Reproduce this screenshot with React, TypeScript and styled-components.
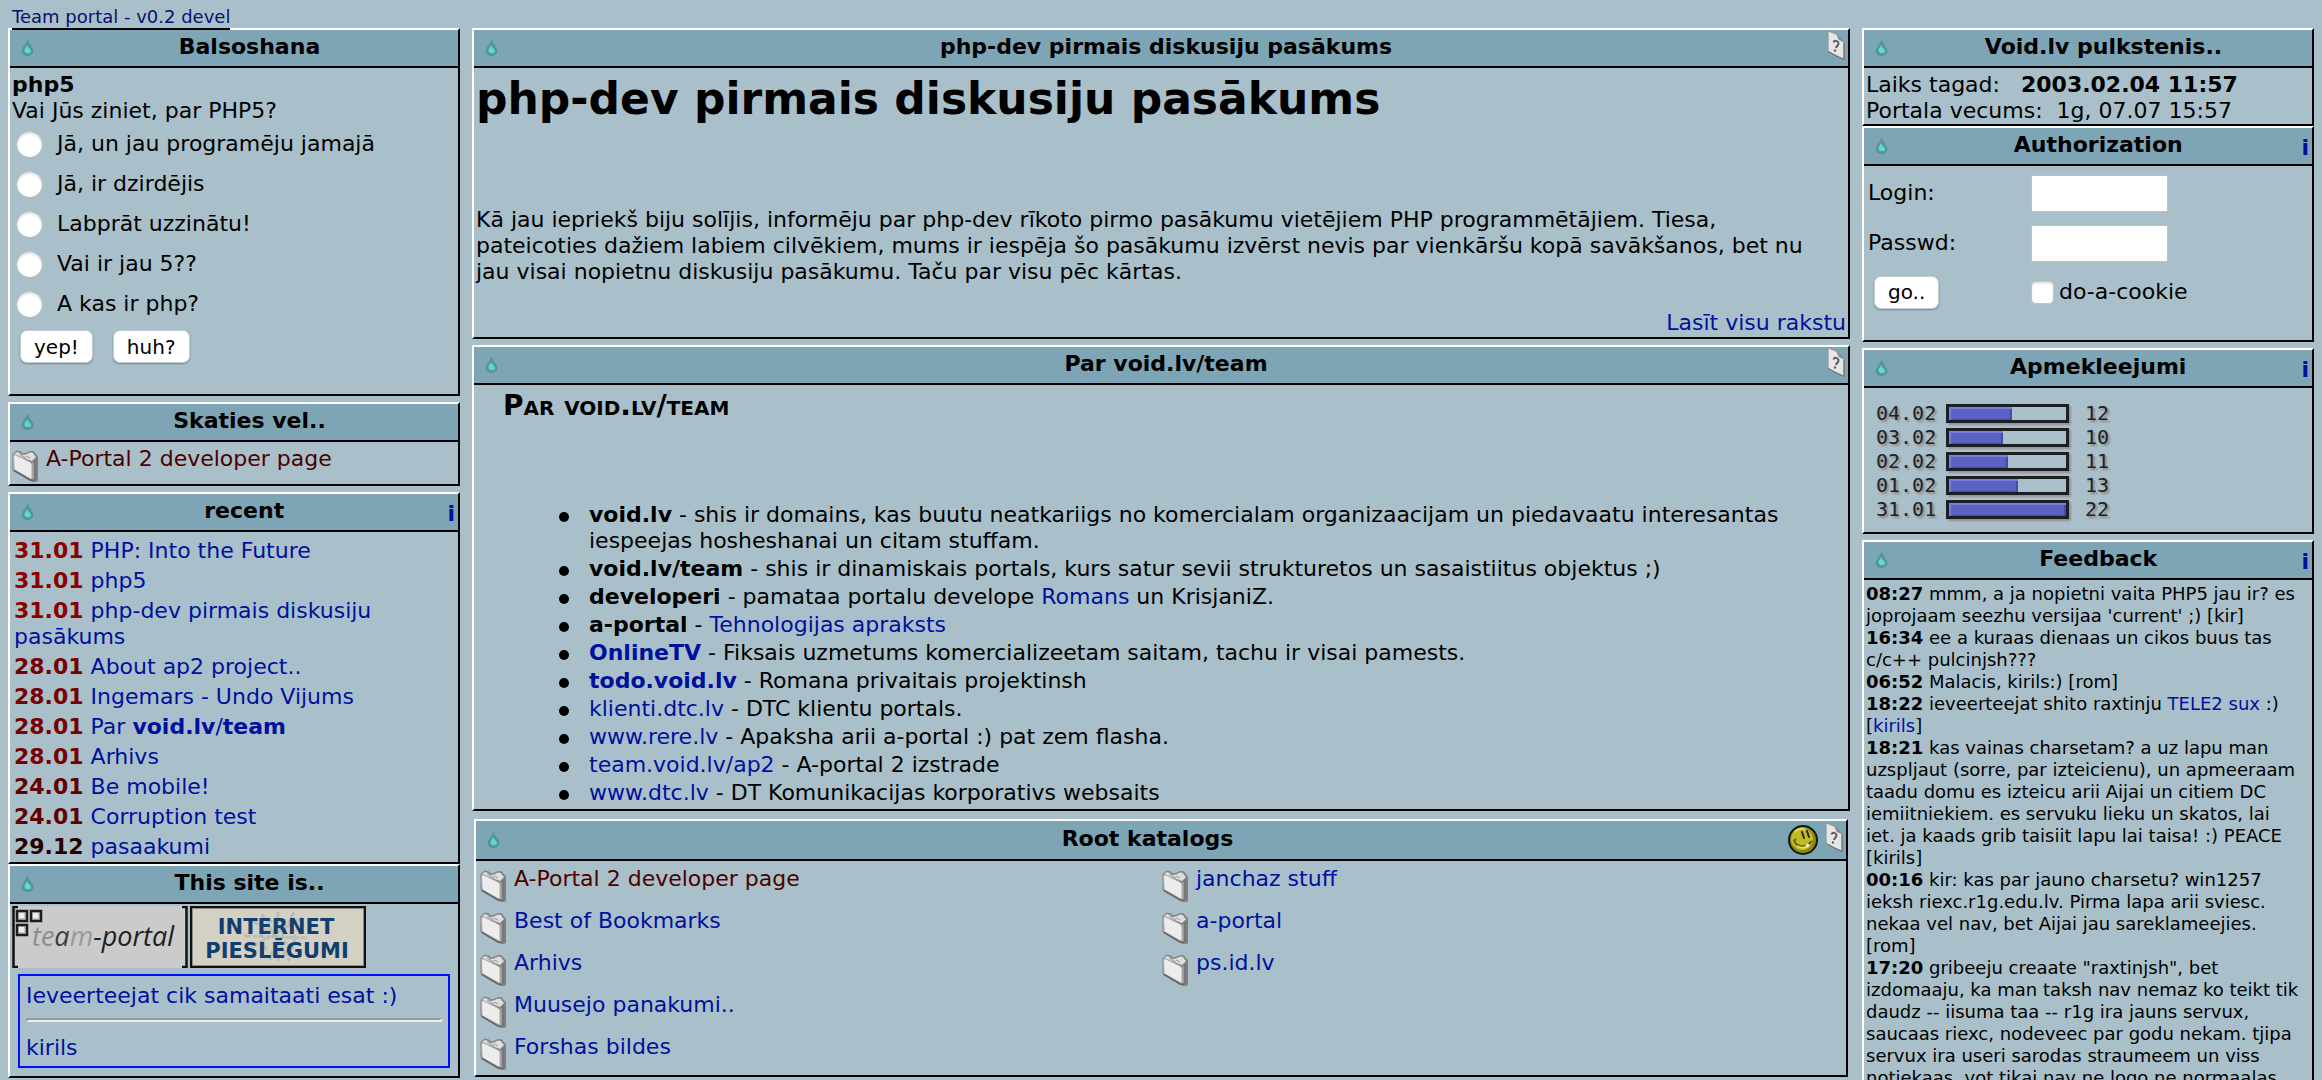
import React from "react";
import styled, { createGlobalStyle } from "styled-components";

const colors = {
  page: "#a9c0ca",
  header: "#7da5b6",
  link: "#00109c",
  visited: "#4b0000",
};

const GlobalStyle = createGlobalStyle`
  * { box-sizing: border-box; }
  html { scrollbar-width: none; }
  body {
    margin: 0;
    background: ${colors.page};
    color: #000;
    font-family: Verdana, "DejaVu Sans", sans-serif;
    font-size: 22px;
    line-height: 26px;
  }
  h1, h2, h3, p, ul { margin: 0; padding: 0; }
  ul { list-style: none; }
`;

const Page = styled.div`
  padding: 6px 8px 0;
`;

const TopBar = styled.header`
  display: flex;
  height: 22px;
  padding-left: 4px;
`;

const VersionLink = styled.a`
  position: relative;
  z-index: 1;
  height: 24px;
  border-bottom: 2px solid #000;
  color: #0a1070;
  font-size: 18px;
  line-height: 22px;
  text-decoration: none;
`;

const Columns = styled.main`
  display: grid;
  grid-template-columns: 452px minmax(0, 1fr) 452px;
  gap: 12px;
  align-items: start;
`;

const Column = styled.div`
  display: flex;
  flex-direction: column;
`;

const PanelBox = styled.section<{ $gap: number; $inset: number }>`
  margin: ${(p) => p.$gap}px ${(p) => p.$inset}px 0;
  border: 2px solid;
  border-color: #fff #000 #000 #fff;
`;

const PanelHeader = styled.header<{ $tall: boolean }>`
  display: flex;
  align-items: center;
  height: ${(p) => (p.$tall ? 40 : 38)}px;
  border-bottom: 2px solid #000;
  background: ${colors.header};
`;

const DropCell = styled.span`
  display: flex;
  width: 31px;
  padding-left: 11px;
`;

const PanelTitle = styled.h2`
  flex: 1;
  padding-bottom: 2px;
  font-size: 22px;
  line-height: 26px;
  text-align: center;
`;

const Tools = styled.span`
  display: flex;
  align-items: center;
  gap: 7px;
  padding-right: 3px;
`;

const InfoLink = styled.a`
  padding-top: 4px;
  color: ${colors.link};
  font-weight: bold;
  text-decoration: none;
`;

const Body = styled.div<{ $pad: string }>`
  padding: ${(p) => p.$pad};
`;

const Link = styled.a<{ $visited?: boolean }>`
  color: ${(p) => (p.$visited ? colors.visited : colors.link)};
  text-decoration: none;
`;

const Option = styled.label`
  display: flex;
  align-items: center;
  gap: 14px;
  height: 40px;
  padding-left: 4px;
`;

const Radio = styled.input`
  appearance: none;
  width: 27px;
  height: 27px;
  margin: 0;
  border: 1px solid #b4b8ba;
  border-radius: 50%;
  background: #fff;
  box-shadow: inset 0 2px 2px #e2e2e2;
  &:checked { background: radial-gradient(#333 30%, #fff 34%); }
`;

const ButtonRow = styled.div`
  display: flex;
  gap: 20px;
  padding: 6px 8px;
`;

const Button = styled.button`
  justify-self: start;
  height: 33px;
  padding: 0 13px;
  border: 1px solid #c3ccd1;
  border-radius: 7px;
  background: #fff;
  box-shadow: 0 1px 2px #6f8590;
  color: #000;
  font-family: inherit;
  font-size: 20px;
  line-height: 30px;
`;

const FolderRow = styled.div`
  display: flex;
  gap: 8px;
  height: 36px;
  svg { margin-top: 4px; }
`;

const RecentList = styled.ul`
  display: flex;
  flex-direction: column;
  gap: 4px;
`;

const DateMark = styled.b<{ $color: string }>`
  color: ${(p) => p.$color};
`;

const Badges = styled.div`
  display: flex;
  gap: 2px;
  a { display: flex; }
`;

const Quote = styled.div`
  margin: 6px;
  padding: 7px 6px 5px;
  border: 2px solid #0010ff;
`;

const Rule = styled.hr`
  height: 4px;
  margin: 9px 0 13px;
  border: 2px solid;
  border-color: #999a9c #eee #eee #999a9c;
`;

const Headline = styled.h1`
  margin-bottom: 81px;
  font-size: 44px;
  line-height: 54px;
`;

const Lead = styled.p`
  padding-right: 24px;
`;

const ReadMore = styled.div`
  margin-top: 25px;
  text-align: right;
`;

const SmallCaps = styled.h3`
  margin: 0 0 80px 27px;
  font-size: 28px;
  line-height: 32px;
  font-variant: small-caps;
`;

const Bullets = styled.ul`
  display: flex;
  flex-direction: column;
  gap: 2px;
  padding: 0 32px 0 83px;
`;

const Bullet = styled.li`
  display: grid;
  grid-template-columns: 30px 1fr;
  &::before {
    content: "";
    width: 10px;
    height: 10px;
    margin-top: 10px;
    border-radius: 50%;
    background: #000;
  }
`;

const Catalog = styled.div`
  display: grid;
  grid-template-columns: 1fr 1fr;
  grid-template-rows: repeat(5, 36px);
  grid-auto-flow: column;
  row-gap: 6px;
`;

const LoginForm = styled.form`
  display: grid;
  grid-template-columns: 163px 1fr;
  grid-auto-rows: 50px;
  align-items: center;
`;

const TextField = styled.input`
  width: 137px;
  height: 37px;
  padding: 4px;
  border: 1px solid #bfc0c0;
  background: #fff;
  font: inherit;
`;

const GoCell = styled.div`
  display: flex;
  padding: 0 0 2px 6px;
`;

const CookieLabel = styled.label`
  display: flex;
  align-items: center;
  gap: 5px;
  padding-bottom: 2px;
`;

const Checkbox = styled.input`
  appearance: none;
  width: 23px;
  height: 23px;
  margin: 0;
  border: 1px solid #c2c4c5;
  border-radius: 5px;
  background: #fff;
  box-shadow: inset 0 2px 2px #e6e6e6;
  &:checked { background: #445; }
`;

const VisitRow = styled.div`
  display: grid;
  grid-template-columns: 70px 123px 1fr;
  align-items: center;
  height: 24px;
  font-family: "DejaVu Sans Mono", monospace;
  font-size: 20px;
  line-height: 24px;
  color: #222;
  text-shadow: 2px 2px 2px #8f8583;
`;

const Bar = styled.div`
  height: 19px;
  border: 3px solid #1c1f24;
  box-shadow: 2px 2px 2px #988f8e;
`;

const BarFill = styled.div`
  height: 100%;
  background: #5c61c6;
  box-shadow: inset 2px 2px 1px #7b80dc, inset -2px -1px 1px #444aa6;
`;

const VisitCount = styled.span`
  padding-left: 16px;
`;

const Feed = styled.div`
  font-size: 18px;
  line-height: 22px;
`;

const DropIcon = () => (
  <svg width="13" height="16" viewBox="0 0 13 16" aria-hidden="true">
    <path d="M6.5 0.5 C7 4 12 7.500 12 11 C12 14 9.500 15.500 6.500 15.500 C3.500 15.500 1 14 1 11 C1 7.500 6 4 6.500 0.500Z" fill="#4d9c9f" stroke="#5b8d99" strokeWidth="1" />
    <path d="M6 5 C7 8 10 9 10 11.500 C10 13.500 3.500 14 3.500 10.500 C3.500 8.500 5.500 7.500 6 5Z" fill="#62d8cf" />
  </svg>
);

const FolderIcon = () => (
  <svg width="26" height="32" viewBox="0 0 26 32" aria-hidden="true">
    <path d="M1 4 L5 1 L9 2 L11 4 L15 3 L18 1.500 L22 2 L23 4 L25.500 6 V31 L23 31.500 L18 30 L1 20Z" fill="#858585" stroke="#808080" strokeWidth="1" />
    <path d="M2 4 L5 2 L8 3 L10 5 L14 4.500 L18 2.500 L21 3 L22 5 L24 7 L20 11 L3 4.500Z" fill="#dedede" />
    <path d="M7 4 L14 8 M14 6 L18 8" stroke="#999" fill="none" />
    <path d="M1.500 5 L4 5 L18 12 L20 14 V29 L18 28.500 L2 19.500Z" fill="#ececec" stroke="#aaa" strokeWidth="1" />
    <path d="M20.500 12 L24.500 8.500 V30 L21.500 30.500 Z" fill="#777" />
    <path d="M21 12 V29" stroke="#bbb" />
    <path d="M2 20.500 L18 30 L22 31" stroke="#666" fill="none" strokeWidth="1.500" />
  </svg>
);

const PageIcon = () => (
  <svg width="18" height="30" viewBox="0 0 18 30" aria-hidden="true">
    <path d="M1 0.800 L10 4.500 L12 9 L17 12 V29.200 L9 25.500 L1 21.500Z" fill="#e6e6e6" stroke="#959595" strokeWidth="1.200" />
    <path d="M10 4.500 L17 11.500 L12 10Z" fill="#888" />
    <path d="M6.500 12.500 C7.500 9.500 11 11 11.500 13 C12 15 9.500 15.500 9 18" fill="none" stroke="#5c5c5c" strokeWidth="2" />
    <path d="M8.500 19.500 L7.500 21.500" stroke="#5c5c5c" strokeWidth="2" />
    <path d="M1.500 21.500 L9 26 L17 29.500 V13" stroke="#6c6c6c" fill="none" />
  </svg>
);

const SmileyIcon = () => (
  <svg width="30" height="30" viewBox="0 0 30 30" aria-hidden="true">
    <circle cx="15" cy="15" r="14" fill="#8c8718" stroke="#16180c" strokeWidth="2" />
    <circle cx="14" cy="14" r="11" fill="#c1bb25" />
    <path d="M7 7 C9 4 14 3 17 4" stroke="#dcd85c" strokeWidth="2" fill="none" />
    <path d="M14 7 L16 13 M19 6 L21 12" stroke="#29280a" strokeWidth="2" strokeLinecap="round" />
    <path d="M6 15 C8 22 17 24 24 16 M5.500 16 L8 14" stroke="#6a6412" strokeWidth="2" fill="none" />
    <path d="M9 21 C13 24 18 23 21 20" stroke="#e4df4c" strokeWidth="2" fill="none" />
    <circle cx="19.500" cy="20.500" r="1.800" fill="#fbf9b8" />
  </svg>
);

const squares = [[4, 4], [18, 4], [4, 18]];

const TeamBadge = () => (
  <svg width="176" height="62" viewBox="0 0 176 62" role="img" aria-label="team-portal">
    <rect width="176" height="62" fill="#cbcbcb" />
    <path d="M6 1 H1.500 V61 H6 M170 1 H174.500 V61 H170" fill="none" stroke="#111" strokeWidth="2.500" />
    {squares.map(([x, y]) => (
      <g key={`${x}-${y}`}>
        <rect x={x + 1} y={y + 1} width="10" height="10" fill="#c4c4bd" stroke="#1d1d1d" strokeWidth="2.500" />
        <rect x={x + 3} y={y + 3} width="5" height="5" fill="#eeeeea" />
      </g>
    ))}
    <text x="20" y="40" fontFamily="'Open Sans', 'Noto Sans', sans-serif" fontSize="27" fontStyle="italic" fill="#202020">
      <tspan fill="#8d8d8d">te</tspan><tspan fill="#3c3c3c">a</tspan><tspan fill="#999">m</tspan>-portal
    </text>
  </svg>
);

const InternetBadge = () => (
  <svg width="176" height="62" viewBox="0 0 176 62" role="img" aria-label="Internet pieslēgumi">
    <rect x="1" y="1" width="174" height="60" fill="#d5d0c4" stroke="#111" strokeWidth="2" />
    <rect x="2.500" y="2.500" width="171" height="57" fill="none" stroke="#8d8a82" />
    <g fill="none" stroke="#bbbcb5" strokeWidth="3">
      <path d="M88 6 V55 M63 15 L112 48 M112 12 L60 42 M72 8 L100 56 M104 6 L80 54 M54 30 L118 32" strokeDasharray="7 2 4 1" />
      <circle cx="88" cy="31" r="17" strokeDasharray="9 4" />
    </g>
    <g fontFamily="'DejaVu Sans', sans-serif" fontSize="21" fontWeight="bold" fill="#103e6e" textAnchor="middle">
      <text x="86" y="28">INTERNET</text>
      <text x="87" y="52">PIESLĒGUMI</text>
    </g>
  </svg>
);

type PanelProps = {
  title: string;
  tools?: React.ReactNode;
  gap?: number;
  inset?: number;
  tall?: boolean;
  pad: string;
  children: React.ReactNode;
};

const Panel = ({ title, tools, gap = 0, inset = 0, tall = false, pad, children }: PanelProps) => (
  <PanelBox $gap={gap} $inset={inset}>
    <PanelHeader $tall={tall}>
      <DropCell><DropIcon /></DropCell>
      <PanelTitle>{title}</PanelTitle>
      {tools && <Tools>{tools}</Tools>}
    </PanelHeader>
    <Body $pad={pad}>{children}</Body>
  </PanelBox>
);

const Info = () => <InfoLink href="#info">i</InfoLink>;

const Folder = ({ name, visited }: { name: string; visited?: boolean }) => (
  <FolderRow>
    <FolderIcon />
    <Link href="#folder" $visited={visited}>{name}</Link>
  </FolderRow>
);

const answers = [
  "Jā, un jau programēju jamajā",
  "Jā, ir dzirdējis",
  "Labprāt uzzinātu!",
  "Vai ir jau 5??",
  "A kas ir php?",
];

const recent: [string, string, React.ReactNode][] = [
  ["31.01", "#8b0000", "PHP: Into the Future"],
  ["31.01", "#8b0000", "php5"],
  ["31.01", "#8b0000", "php-dev pirmais diskusiju pasākums"],
  ["28.01", "#780000", "About ap2 project.."],
  ["28.01", "#780000", "Ingemars - Undo Vijums"],
  ["28.01", "#780000", <>Par <b>void.lv</b>/<b>team</b></>],
  ["28.01", "#780000", "Arhivs"],
  ["24.01", "#640000", "Be mobile!"],
  ["24.01", "#640000", "Corruption test"],
  ["29.12", "#260000", "pasaakumi"],
];

const visits: [string, number, number][] = [
  ["04.02", 12, 54],
  ["03.02", 10, 46],
  ["02.02", 11, 50],
  ["01.02", 13, 59],
  ["31.01", 22, 100],
];

const feedback: [string, React.ReactNode][] = [
  ["08:27", "mmm, a ja nopietni vaita PHP5 jau ir? es joprojaam seezhu versijaa 'current' ;) [kir]"],
  ["16:34", "ee a kuraas dienaas un cikos buus tas c/c++ pulcinjsh???"],
  ["06:52", "Malacis, kirils:) [rom]"],
  ["18:22", <>ieveerteejat shito raxtinju <Link href="#tele2">TELE2 sux</Link> :) [<Link href="#kirils">kirils</Link>]</>],
  ["18:21", "kas vainas charsetam? a uz lapu man uzspljaut (sorre, par izteicienu), un apmeeraam taadu domu es izteicu arii Aijai un citiem DC iemiitniekiem. es servuku lieku un skatos, lai iet. ja kaads grib taisiit lapu lai taisa! :) PEACE [kirils]"],
  ["00:16", "kir: kas par jauno charsetu? win1257 ieksh riexc.r1g.edu.lv. Pirma lapa arii sviesc. nekaa vel nav, bet Aijai jau sareklameejies. [rom]"],
  ["17:20", "gribeeju creaate \"raxtinjsh\", bet izdomaaju, ka man taksh nav nemaz ko teikt tik daudz -- iisuma taa -- r1g ira jauns servux, saucaas riexc, nodeveec par godu nekam. tjipa servux ira useri sarodas straumeem un viss notiekaas, vot tikai nav ne logo ne normaalas"],
];

export default function App() {
  return (
    <Page>
      <GlobalStyle />
      <TopBar>
        <VersionLink href="#home">Team portal - v0.2 devel</VersionLink>
      </TopBar>
      <Columns>
        <Column>
          <Panel title="Balsoshana" pad="4px 2px 25px">
            <b>php5</b>
            <p>Vai Jūs ziniet, par PHP5?</p>
            <form onSubmit={(e) => e.preventDefault()}>
              {answers.map((a) => (
                <Option key={a}>
                  <Radio type="radio" name="php5" />
                  {a}
                </Option>
              ))}
              <ButtonRow>
                <Button type="submit">yep!</Button>
                <Button type="button">huh?</Button>
              </ButtonRow>
            </form>
          </Panel>
          <Panel title="Skaties vel.." gap={6} pad="4px 2px 2px">
            <Folder name="A-Portal 2 developer page" visited />
          </Panel>
          <Panel title="recent" gap={6} tools={<Info />} pad="6px 4px 2px">
            <RecentList>
              {recent.map(([date, color, text], i) => (
                <li key={i}>
                  <DateMark $color={color}>{date}</DateMark>{" "}
                  <Link href="#article">{text}</Link>
                </li>
              ))}
            </RecentList>
          </Panel>
          <Panel title="This site is.." pad="2px">
            <Badges>
              <a href="#team-portal"><TeamBadge /></a>
              <a href="#internet"><InternetBadge /></a>
            </Badges>
            <Quote>
              <Link href="#quote">Ieveerteejat cik samaitaati esat :)</Link>
              <Rule />
              <Link href="#kirils">kirils</Link>
            </Quote>
          </Panel>
        </Column>

        <Column>
          <Panel title="php-dev pirmais diskusiju pasākums" tools={<a href="#help" aria-label="help"><PageIcon /></a>} pad="4px 2px 1px">
            <Headline>php-dev pirmais diskusiju pasākums</Headline>
            <Lead>
              Kā jau iepriekš biju solījis, informēju par php-dev rīkoto pirmo pasākumu vietējiem PHP programmētājiem. Tiesa,
              pateicoties dažiem labiem cilvēkiem, mums ir iespēja šo pasākumu izvērst nevis par vienkāršu kopā savākšanos, bet nu
              jau visai nopietnu diskusiju pasākumu. Taču par visu pēc kārtas.
            </Lead>
            <ReadMore><Link href="#article">Lasīt visu rakstu</Link></ReadMore>
          </Panel>
          <Panel title="Par void.lv/team" gap={6} tools={<a href="#help" aria-label="help"><PageIcon /></a>} pad="5px 2px 3px">
            <SmallCaps>Par void.lv/team</SmallCaps>
            <Bullets>
              <Bullet><span><b>void.lv</b> - shis ir domains, kas buutu neatkariigs no komercialam organizaacijam un piedavaatu interesantas iespeejas hosheshanai un citam stuffam.</span></Bullet>
              <Bullet><span><b>void.lv/team</b> - shis ir dinamiskais portals, kurs satur sevii strukturetos un sasaistiitus objektus ;)</span></Bullet>
              <Bullet><span><b>developeri</b> - pamataa portalu develope <Link href="#romans">Romans</Link> un KrisjaniZ.</span></Bullet>
              <Bullet><span><b>a-portal</b> - <Link href="#tech">Tehnologijas apraksts</Link></span></Bullet>
              <Bullet><span><Link href="#tv"><b>OnlineTV</b></Link> - Fiksais uzmetums komercializeetam saitam, tachu ir visai pamests.</span></Bullet>
              <Bullet><span><Link href="#todo"><b>todo.void.lv</b></Link> - Romana privaitais projektinsh</span></Bullet>
              <Bullet><span><Link href="#klienti">klienti.dtc.lv</Link> - DTC klientu portals.</span></Bullet>
              <Bullet><span><Link href="#rere">www.rere.lv</Link> - Apaksha arii a-portal :) pat zem flasha.</span></Bullet>
              <Bullet><span><Link href="#ap2">team.void.lv/ap2</Link> - A-portal 2 izstrade</span></Bullet>
              <Bullet><span><Link href="#dtc">www.dtc.lv</Link> - DT Komunikacijas korporativs websaits</span></Bullet>
            </Bullets>
          </Panel>
          <Panel
            title="Root katalogs"
            gap={8}
            inset={2}
            tall
            pad="5px 2px 5px 4px"
            tools={<><SmileyIcon /><a href="#help" aria-label="help"><PageIcon /></a></>}
          >
            <Catalog>
              <Folder name="A-Portal 2 developer page" visited />
              <Folder name="Best of Bookmarks" />
              <Folder name="Arhivs" />
              <Folder name="Muusejo panakumi.." />
              <Folder name="Forshas bildes" />
              <Folder name="janchaz stuff" />
              <Folder name="a-portal" />
              <Folder name="ps.id.lv" />
            </Catalog>
          </Panel>
        </Column>

        <Column>
          <Panel title="Void.lv pulkstenis.." pad="4px 2px 0">
            <p>Laiks tagad:&nbsp;&nbsp; <b>2003.02.04 11:57</b></p>
            <p>Portala vecums:&nbsp; 1g, 07.07 15:57</p>
          </Panel>
          <Panel title="Authorization" tools={<Info />} pad="2px 4px 22px">
            <LoginForm onSubmit={(e) => e.preventDefault()}>
              <label htmlFor="login">Login:</label>
              <TextField id="login" type="text" />
              <label htmlFor="passwd">Passwd:</label>
              <TextField id="passwd" type="password" />
              <GoCell><Button type="submit">go..</Button></GoCell>
              <CookieLabel><Checkbox type="checkbox" />do-a-cookie</CookieLabel>
            </LoginForm>
          </Panel>
          <Panel title="Apmekleejumi" gap={6} tools={<Info />} pad="13px 12px 11px">
            {visits.map(([day, count, share]) => (
              <VisitRow key={day}>
                <span>{day}</span>
                <Bar><BarFill style={{ width: `${share}%` }} /></Bar>
                <VisitCount>{count}</VisitCount>
              </VisitRow>
            ))}
          </Panel>
          <Panel title="Feedback" gap={6} tools={<Info />} pad="3px 10px 0 2px">
            <Feed>
              {feedback.map(([time, text]) => (
                <p key={time}><b>{time}</b> {text}</p>
              ))}
            </Feed>
          </Panel>
        </Column>
      </Columns>
    </Page>
  );
}
